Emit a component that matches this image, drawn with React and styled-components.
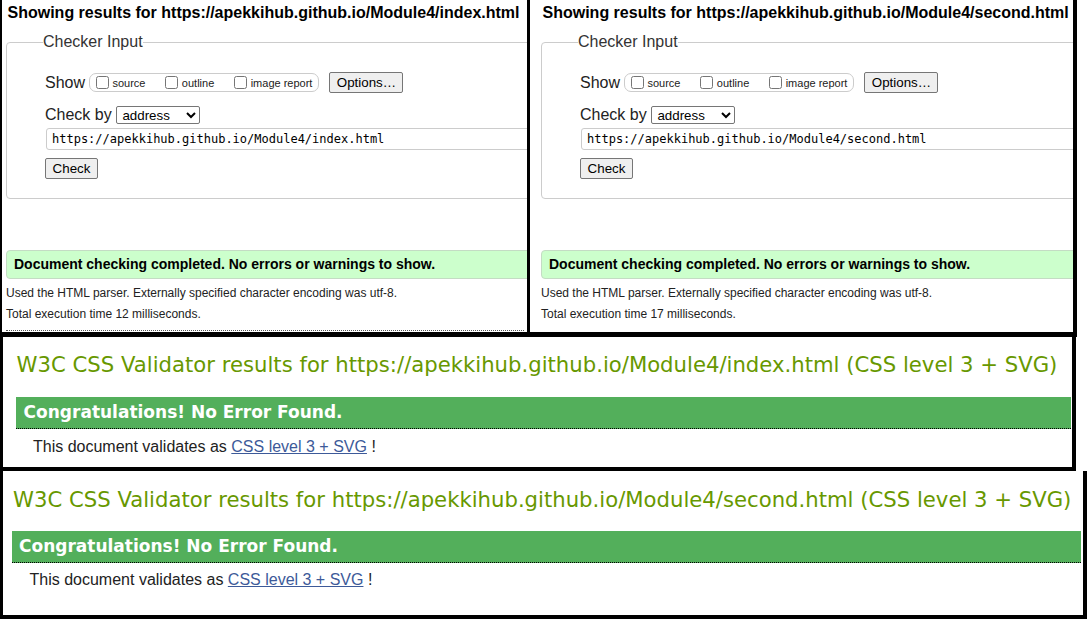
import React from 'react';
import styled, { createGlobalStyle } from 'styled-components';

const Global = createGlobalStyle`
  html, body { margin: 0; padding: 0; background: #fff; }
  body {
    width: 1091px;
    height: 623px;
    overflow: hidden;
    font-family: "Liberation Sans", Arial, sans-serif;
    color: #000;
  }
`;

const Page = styled.div`
  display: flex;
  flex-direction: column;
  align-items: flex-start;
`;

const TopRow = styled.div`
  display: flex;
  height: 337px;
`;

const NuPanel = styled.section`
  box-sizing: border-box;
  width: ${p => p.$width}px;
  height: 100%;
  overflow: hidden;
  background: #fff;
  border: 0 solid #000;
  border-left-width: ${p => p.$bl}px;
  border-right-width: ${p => p.$br}px;
  border-bottom-width: 5px;
  padding-left: ${p => p.$pl}px;
`;

const NuTitle = styled.h2`
  margin: 0;
  padding: 4px 0 0 1.5px;
  font-size: 16px;
  line-height: 18px;
  font-weight: bold;
  white-space: nowrap;
`;

const Fieldset = styled.fieldset`
  box-sizing: border-box;
  width: 700px;
  margin: 11px 0 0;
  border: 1px solid #ccc;
  border-radius: 4px;
  padding: 0 0 19px 38px;
`;

const Legend = styled.legend`
  padding: 0;
  margin-left: -2px;
  font-size: 16px;
  line-height: 18px;
  color: #333;
`;

const FormRow = styled.div`
  display: flex;
  align-items: center;
  height: ${p => p.$h}px;
  margin-top: ${p => p.$mt}px;
  font-size: 16px;
  color: #222;
`;

const RowLabel = styled.span`
  margin-right: ${p => p.$gap}px;
  white-space: nowrap;
`;

const CheckGroup = styled.span`
  box-sizing: border-box;
  display: inline-flex;
  align-items: center;
  height: 19px;
  padding: 0 6px 0 6px;
  border: 1px solid #ccc;
  border-radius: 7px;
  margin-right: 10px;
`;

const CheckItem = styled.label`
  display: inline-flex;
  align-items: center;
  font-size: 11px;
  color: #222;
  margin-left: ${p => (p.$first ? 0 : 20)}px;
  white-space: nowrap;
`;

const Box = styled.input`
  width: 13px;
  height: 13px;
  margin: 0 3.4px 0 0;
`;

const Button = styled.button`
  box-sizing: border-box;
  height: 20.4px;
  width: ${p => p.$w}px;
  padding: 0;
  font-family: "Liberation Sans", Arial, sans-serif;
  font-size: 13.33px;
  color: #000;
  background: #efefef;
  border: 1px solid #767676;
  border-radius: 2px;
  margin-top: ${p => p.$mt || 0}px;
  display: block;
`;

const Select = styled.select`
  box-sizing: border-box;
  width: 84px;
  height: 18px;
  font-family: "Liberation Sans", Arial, sans-serif;
  font-size: 13.33px;
  color: #000;
  background: #fff;
  border: 1px solid #767676;
  border-radius: 2px;
  padding: 0 0 0 1px;
`;

const UrlInput = styled.input`
  box-sizing: border-box;
  display: block;
  width: 700px;
  height: 22px;
  margin: 2.7px 0 0 0.5px;
  padding: 0 0 0 5.5px;
  border: 1px solid #ccc;
  border-radius: 3px;
  font-family: "DejaVu Sans Mono", "Liberation Mono", monospace;
  font-size: 12px;
  color: #000;
  background: #fff;
`;

const Success = styled.div`
  box-sizing: border-box;
  width: 700px;
  height: 29px;
  margin-top: 51px;
  padding-left: 7px;
  display: flex;
  align-items: center;
  background: #ccffcc;
  border: 1px solid #c4dcc4;
  border-radius: 4px;
  font-size: 14px;
  font-weight: bold;
  white-space: nowrap;
`;

const Note = styled.p`
  margin: ${p => p.$mt}px 0 0;
  font-size: 12px;
  line-height: 14px;
  color: #222;
  white-space: nowrap;
`;

const Dotted = styled.hr`
  width: 518px;
  margin: 8.3px 0 0;
  border: 0;
  border-top: 1px dotted #555;
`;

const CssPanel = styled.section`
  box-sizing: border-box;
  width: ${p => p.$width}px;
  height: ${p => p.$height}px;
  background: #fff;
  border: 0 solid #000;
  border-left-width: 3px;
  border-right-width: 4px;
  border-bottom-width: 4px;
  padding: ${p => p.$pt}px 0 0 ${p => p.$pl}px;
`;

const CssTitle = styled.h2`
  margin: 0 0 0 1px;
  font-family: "DejaVu Sans", Verdana, sans-serif;
  font-weight: normal;
  font-size: 21.2px;
  line-height: 24px;
  color: #679800;
  white-space: nowrap;
`;

const Congrats = styled.h3`
  box-sizing: border-box;
  width: ${p => p.$w}px;
  height: 32px;
  margin: ${p => p.$mt}px 0 0;
  padding: 0 0 0 ${p => p.$pl}px;
  background: #53af5b;
  border-bottom: 1px dotted #000;
  font-family: "DejaVu Sans", Verdana, sans-serif;
  font-weight: bold;
  font-size: 17px;
  line-height: 31px;
  color: #fff;
  white-space: nowrap;
`;

const Validates = styled.p`
  margin: ${p => p.$mt}px 0 0 ${p => p.$ml}px;
  font-size: 16px;
  line-height: 20px;
  color: #222;
  white-space: nowrap;
`;

const DocLink = styled.a`
  color: #3d5a99;
  text-decoration: underline;
`;

function NuResult({ url, ms, width, bl, br, pl, dotted }) {
  return (
    <NuPanel $width={width} $bl={bl} $br={br} $pl={pl}>
      <NuTitle>Showing results for {url}</NuTitle>
      <Fieldset>
        <Legend>Checker Input</Legend>
        <FormRow $h={21} $mt={21}>
          <RowLabel $gap={4}>Show</RowLabel>
          <CheckGroup>
            <CheckItem $first><Box type="checkbox" />source</CheckItem>
            <CheckItem><Box type="checkbox" />outline</CheckItem>
            <CheckItem><Box type="checkbox" />image report</CheckItem>
          </CheckGroup>
          <Button type="button" $w={74}>Options…</Button>
        </FormRow>
        <FormRow $h={20} $mt={12}>
          <RowLabel $gap={4.7}>Check by</RowLabel>
          <Select defaultValue="address">
            <option value="address">address</option>
            <option value="upload">file upload</option>
            <option value="text">text input</option>
          </Select>
        </FormRow>
        <UrlInput type="text" defaultValue={url} />
        <Button type="button" $w={53} $mt={8.6}>Check</Button>
      </Fieldset>
      <Success>Document checking completed. No errors or warnings to show.</Success>
      <Note $mt={7.4}>Used the HTML parser. Externally specified character encoding was utf-8.</Note>
      <Note $mt={7.3}>Total execution time {ms} milliseconds.</Note>
      {dotted && <Dotted />}
    </NuPanel>
  );
}

function CssResult({ url, width, height, pt, pl, barW, barMt, barPl, textMt, textMl }) {
  return (
    <CssPanel $width={width} $height={height} $pt={pt} $pl={pl}>
      <CssTitle>W3C CSS Validator results for {url} (CSS level 3 + SVG)</CssTitle>
      <Congrats $w={barW} $mt={barMt} $pl={barPl}>Congratulations! No Error Found.</Congrats>
      <Validates $mt={textMt} $ml={textMl}>
        This document validates as <DocLink href="#">CSS level 3 + SVG</DocLink> !
      </Validates>
    </CssPanel>
  );
}

export default function App() {
  return (
    <>
      <Global />
      <Page>
        <TopRow>
          <NuResult
            url="https://apekkihub.github.io/Module4/index.html"
            ms={12}
            width={530}
            bl={2}
            br={3}
            pl={4}
            dotted
          />
          <NuResult
            url="https://apekkihub.github.io/Module4/second.html"
            ms={17}
            width={547}
            bl={0}
            br={4}
            pl={11}
          />
        </TopRow>
        <CssResult
          url="https://apekkihub.github.io/Module4/index.html"
          width={1076}
          height={134}
          pt={16}
          pl={12.6}
          barW={1055}
          barMt={19.7}
          barPl={8}
          textMt={8.4}
          textMl={17.4}
        />
        <CssResult
          url="https://apekkihub.github.io/Module4/second.html"
          width={1087}
          height={148}
          pt={16.5}
          pl={9}
          barW={1069}
          barMt={19.5}
          barPl={7}
          textMt={7}
          textMl={17.5}
        />
      </Page>
    </>
  );
}
